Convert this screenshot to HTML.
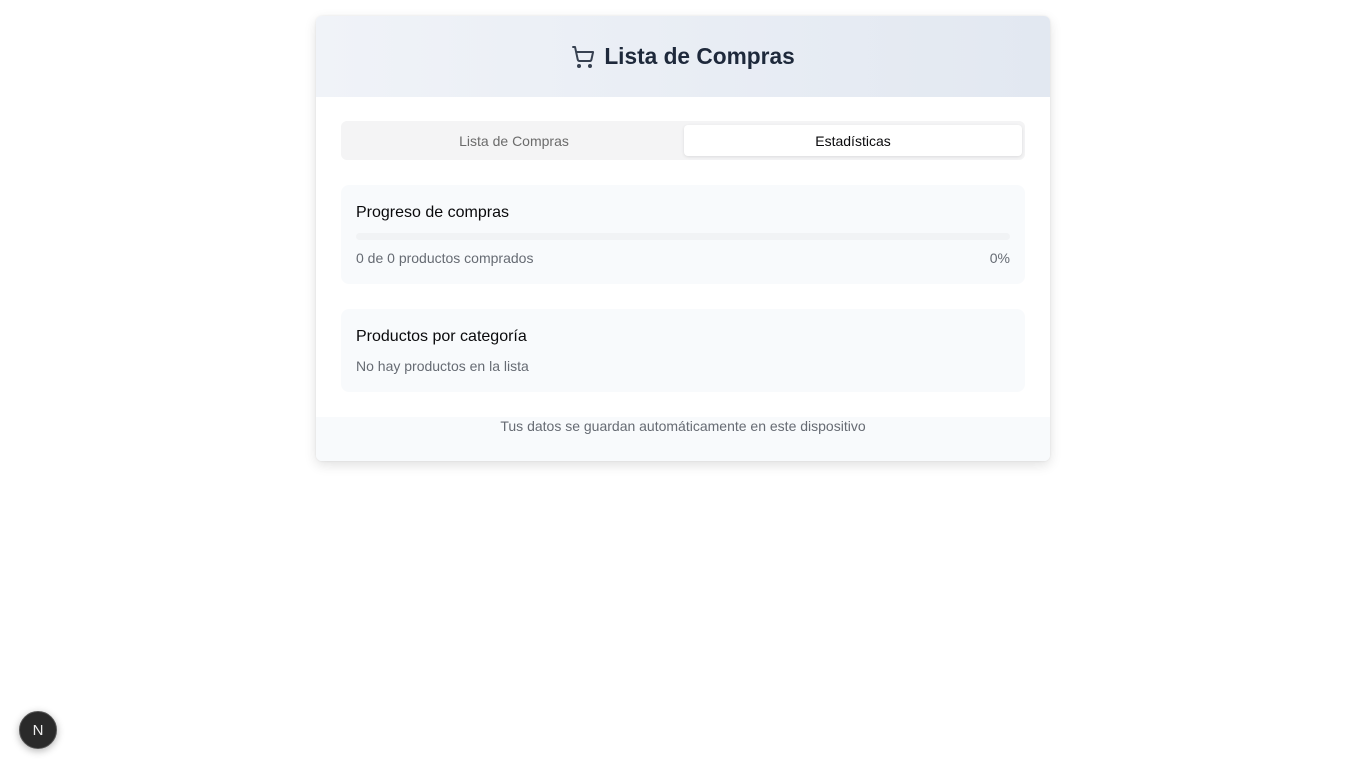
<!DOCTYPE html>
<html><head><meta charset="utf-8"><style>
*{box-sizing:border-box;margin:0;padding:0}
body{width:1366px;height:768px;background:#fff;font-family:"Liberation Sans",Arial,sans-serif;position:relative;overflow:hidden}
.card{position:absolute;left:316px;top:16px;width:734px;height:445px;border-radius:6px;background:#fff;box-shadow:0 4px 12px rgba(0,0,0,.12),0 0 2px rgba(0,0,0,.08);overflow:hidden}
.hdr{height:81px;background:linear-gradient(90deg,#f0f3f8,#e2e8f1);display:flex;align-items:center;justify-content:center;gap:9px}
.hdr h1{font-size:22.7px;font-weight:bold;color:#1e293b}
.tabs{position:absolute;left:25px;top:105px;width:684px;height:39px;background:#f4f4f5;border-radius:6px}
.tab{position:absolute;top:4px;height:31px;width:338px;display:flex;align-items:center;justify-content:center;font-size:14px;color:#6b6b6b}
.tab.on{left:343px;background:#fff;color:#09090b;border-radius:4px;box-shadow:0 1px 3px rgba(0,0,0,.1)}
.box{position:absolute;left:25px;width:684px;background:#f8fafc;border-radius:8px;padding:0 15px}
.t{font-size:16px;color:#09090b}
.s{font-size:14px;color:#666b73}
.foot{position:absolute;left:0;top:401px;width:734px;height:44px;background:#f8fafc;text-align:center;font-size:14px;color:#666b73;padding-top:1px}
.n{position:absolute;left:19px;top:711px;width:38px;height:38px;border-radius:50%;background:#2a2a2a;box-shadow:0 2px 8px rgba(0,0,0,.3);border:1px solid #555;color:#eee;font-size:15px;display:flex;align-items:center;justify-content:center}
</style></head><body>
<div class="card">
<div class="hdr"><svg width="24" height="24" viewBox="0 0 24 24" fill="none" stroke="#374151" stroke-width="2" stroke-linecap="round" stroke-linejoin="round"><circle cx="8" cy="21" r="1"/><circle cx="19" cy="21" r="1"/><path d="M2.05 2.05h2l2.66 12.42a2 2 0 0 0 2 1.58h9.78a2 2 0 0 0 1.95-1.57l1.65-7.43H5.12"/></svg><h1>Lista de Compras</h1></div>
<div class="tabs"><div class="tab" style="left:4px">Lista de Compras</div><div class="tab on">Estadísticas</div></div>
<div class="box" style="top:169px;height:99px">
<div class="t" style="position:absolute;top:19px">Progreso de compras</div>
<div style="position:absolute;left:15px;right:15px;top:48px;height:7px;border-radius:4px;background:#f1f3f5"></div>
<div class="s" style="position:absolute;top:65px;left:15px">0 de 0 productos comprados</div>
<div class="s" style="position:absolute;top:65px;right:15px">0%</div>
</div>
<div class="box" style="top:293px;height:83px">
<div class="t" style="position:absolute;top:19px">Productos por categoría</div>
<div class="s" style="position:absolute;top:49px">No hay productos en la lista</div>
</div>
<div class="foot">Tus datos se guardan automáticamente en este dispositivo</div>
</div>
<div class="n">N</div>
</body></html>
